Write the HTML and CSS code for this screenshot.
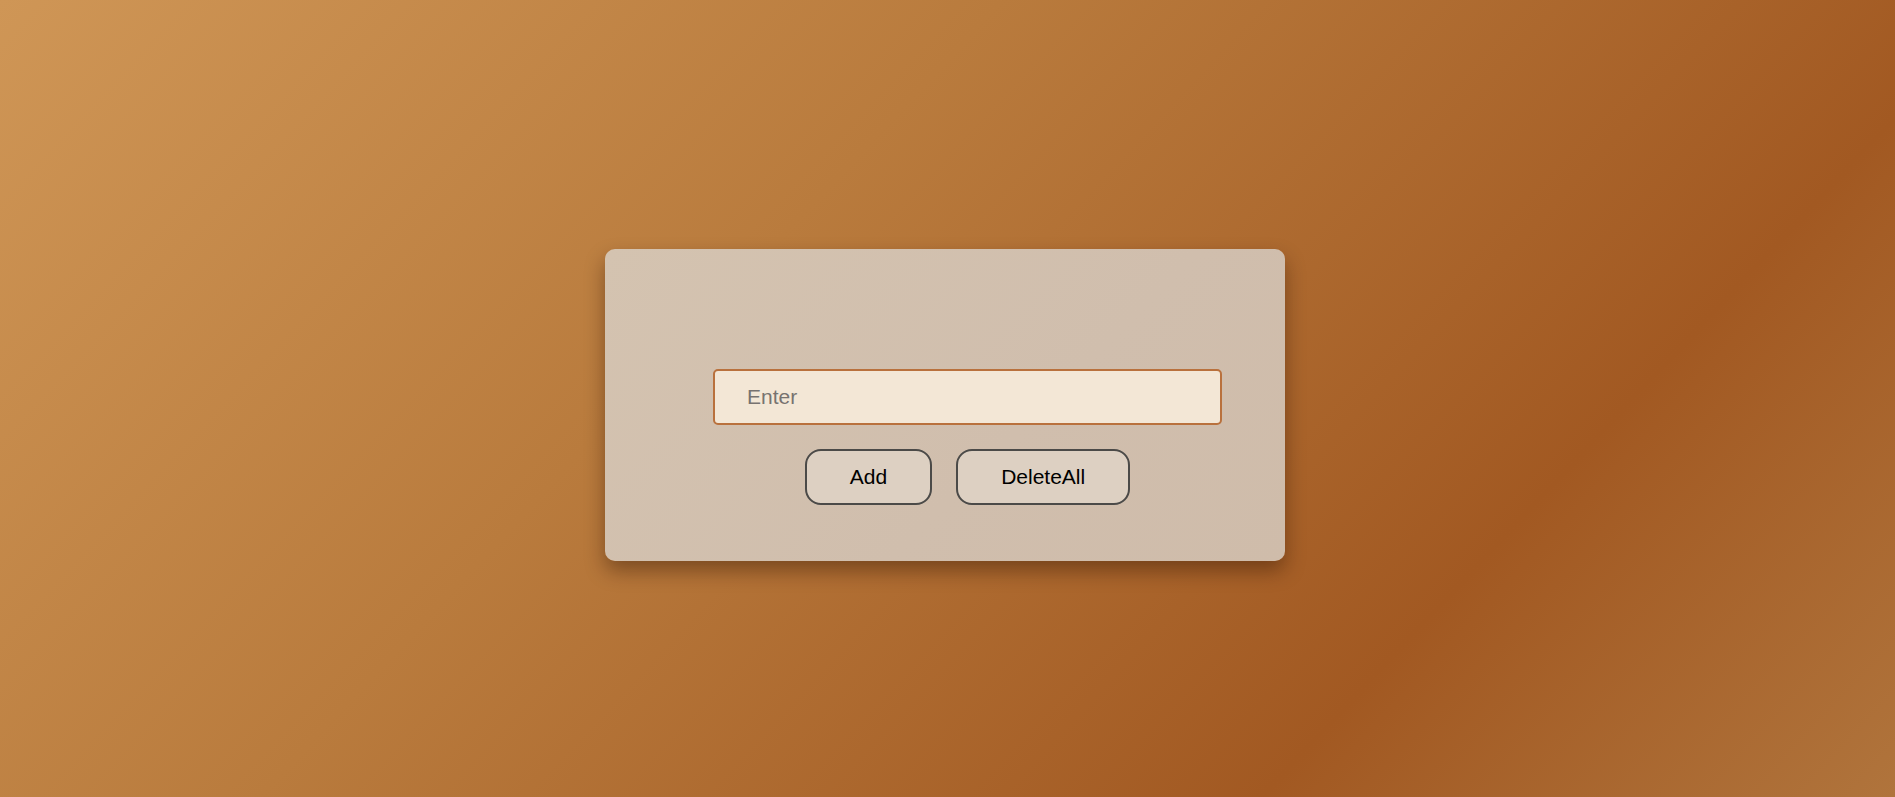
FILE: index.html
```html
<!DOCTYPE html>
<html lang="en">
<head>
<meta charset="utf-8">
<title>Todo</title>
<link rel="stylesheet" href="styles.css">
</head>
<body>
  <main class="card">
    <div class="content">
      <input class="entry" type="text" placeholder="Enter">
      <div class="actions">
        <button class="btn">Add</button>
        <button class="btn">DeleteAll</button>
      </div>
    </div>
  </main>
</body>
</html>
```

FILE: styles.css
```css
* { box-sizing: border-box; }

html, body { height: 100%; }

body {
  margin: 0;
  min-height: 100vh;
  display: flex;
  justify-content: center;
  align-items: center;
  padding: 13px 5px 0 0;
  font-family: "Liberation Sans", Arial, sans-serif;
  background: linear-gradient(133deg, #cf9656 0%, #b97b3d 38%, #a25922 76%, #b0743c 100%);
}

.card {
  width: 680px;
  height: 312px;
  padding: 120px 63px 0 108px;
  border-radius: 10px;
  background: linear-gradient(135deg, #d4c3b0 0%, #d0bead 60%, #cfbcaa 100%);
  box-shadow: 0 10px 20px rgba(40, 15, 0, 0.4);
}

.content {
  display: flex;
  flex-direction: column;
  align-items: center;
  gap: 24px;
}

.entry {
  width: 509px;
  height: 56px;
  padding: 0 32px;
  border: 2px solid #b9713d;
  border-radius: 5px;
  background: #f3e7d6;
  font-family: inherit;
  font-size: 21px;
  color: #222;
  outline: none;
}

.entry::placeholder { color: #777370; }

.actions {
  display: flex;
  gap: 24px;
}

.btn {
  height: 56px;
  padding: 0 43px;
  border: 2px solid #4b4a48;
  border-radius: 16px;
  background: #ddd0c2;
  color: #000;
  font-family: inherit;
  font-size: 21px;
  cursor: pointer;
}
```
